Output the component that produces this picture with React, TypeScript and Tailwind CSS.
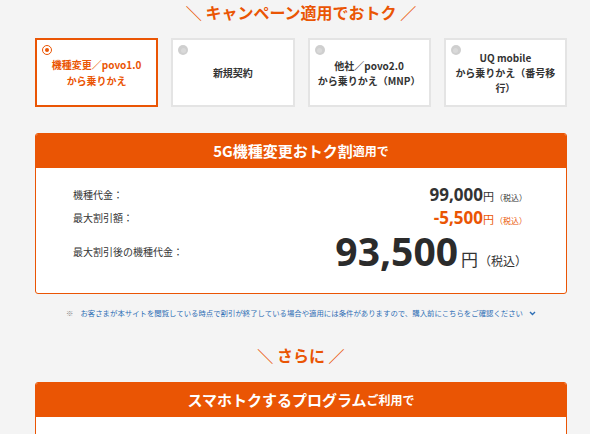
import React from "react";

const Radio = ({ active }: { active: boolean }) =>
  active ? (
    <span className="absolute left-[5px] top-[5px] flex h-[10px] w-[10px] items-center justify-center rounded-full border-[1.5px] border-[#ea5504] bg-white">
      <span className="h-[4px] w-[4px] rounded-full bg-[#ea5504]" />
    </span>
  ) : (
    <span className="absolute left-[5px] top-[5px] flex h-[10px] w-[10px] items-center justify-center rounded-full bg-[#cfcfcf]">
      <span className="h-[5px] w-[5px] rounded-full bg-[#d9d9d9]" />
    </span>
  );

const Card = ({ active, lines }: { active?: boolean; lines: string[] }) => (
  <div
    className={
      active
        ? "relative flex h-[69px] items-center justify-center border-2 border-[#ea5504] bg-white px-[7px]"
        : "relative flex h-[69px] items-center justify-center border-2 border-[#e4e4e4] bg-white px-[7px]"
    }
  >
    <Radio active={!!active} />
    <p
      className={
        active
          ? "text-center text-[10px] font-bold leading-[16px] text-[#ea5504]"
          : "text-center text-[10px] font-bold leading-[15px] text-[#333]"
      }
    >
      {lines.map((l, i) => (
        <React.Fragment key={i}>
          {i > 0 && <br />}
          {l}
        </React.Fragment>
      ))}
    </p>
  </div>
);

export default function App() {
  return (
    <div className="h-[434px] w-[590px] overflow-hidden bg-[#f4f4f4] font-['Noto_Sans_CJK_JP',sans-serif] text-[#333]">
      <div className="ml-[35px] w-[532px]">
        <h2 className="text-center text-[16px] font-bold leading-[24px] text-[#ea5504]">
          ＼ キャンペーン適用でおトク ／
        </h2>

        <div className="mt-[14px] grid grid-cols-4 gap-[13px]">
          <Card active lines={["機種変更／povo1.0", "から乗りかえ"]} />
          <Card lines={["新規契約"]} />
          <Card lines={["他社／povo2.0", "から乗りかえ（MNP）"]} />
          <Card lines={["UQ mobile", "から乗りかえ（番号移行）"]} />
        </div>

        <div className="mt-[26px] overflow-hidden rounded-[3px] border-[1.5px] border-[#ea5504] bg-white">
          <div className="flex h-[34px] items-center justify-center bg-[#ea5504] text-white">
            <span className="text-[15px] font-bold">5G機種変更おトク割</span>
            <span className="text-[12px] font-bold">適用で</span>
          </div>
          <div className="pl-[37px] pr-[39px] pt-[15px] pb-[20px]">
            <div className="flex h-[23px] items-center justify-between">
              <span className="text-[10px]">機種代金：</span>
              <span className="flex items-baseline leading-none">
                <span className="font-['Open_Sans',sans-serif] text-[17px] font-bold">99,000</span>
                <span className="text-[11px]">円</span>
                <span className="ml-[1px] text-[8px]">（税込）</span>
              </span>
            </div>
            <div className="flex h-[23px] items-center justify-between">
              <span className="text-[10px]">最大割引額：</span>
              <span className="flex items-baseline leading-none text-[#ea5504]">
                <span className="font-['Open_Sans',sans-serif] text-[17px] font-bold">-5,500</span>
                <span className="text-[11px]">円</span>
                <span className="ml-[1px] text-[8px]">（税込）</span>
              </span>
            </div>
            <div className="flex h-[44px] items-center justify-between">
              <span className="text-[10px]">最大割引後の機種代金：</span>
              <span className="flex items-baseline leading-none">
                <span className="font-['Open_Sans',sans-serif] text-[39px] font-bold leading-[36px] text-[#2b2b2b]">
                  93,500
                </span>
                <span className="ml-[3px] text-[17px]">円</span>
                <span className="ml-[1px] text-[12px]">（税込）</span>
              </span>
            </div>
          </div>
        </div>

        <div className="mt-[11px] flex h-[16px] items-center justify-center text-[7.4px] leading-[16px]">
          <span className="text-[#888]">※</span>
          <span className="ml-[7px] text-[#2f6fb5]">
            お客さまが本サイトを閲覧している時点で割引が終了している場合や適用には条件がありますので、購入前にこちらをご確認ください
          </span>
          <svg className="ml-[6px]" width="7" height="5" viewBox="0 0 7 5">
            <path d="M1 1 L3.5 3.5 L6 1" fill="none" stroke="#2f6fb5" strokeWidth="1.4" />
          </svg>
        </div>

        <h2 className="mt-[22px] text-center text-[16px] font-bold leading-[24px] text-[#ea5504]">
          ＼ さらに ／
        </h2>

        <div className="mt-[15px] overflow-hidden rounded-t-[3px] border-[1.5px] border-[#ea5504] bg-white">
          <div className="flex h-[34px] items-center justify-center bg-[#ea5504] text-white">
            <span className="text-[15px] font-bold">スマホトクするプログラム</span>
            <span className="text-[12px] font-bold">ご利用で</span>
          </div>
          <div className="h-[40px]" />
        </div>
      </div>
    </div>
  );
}
